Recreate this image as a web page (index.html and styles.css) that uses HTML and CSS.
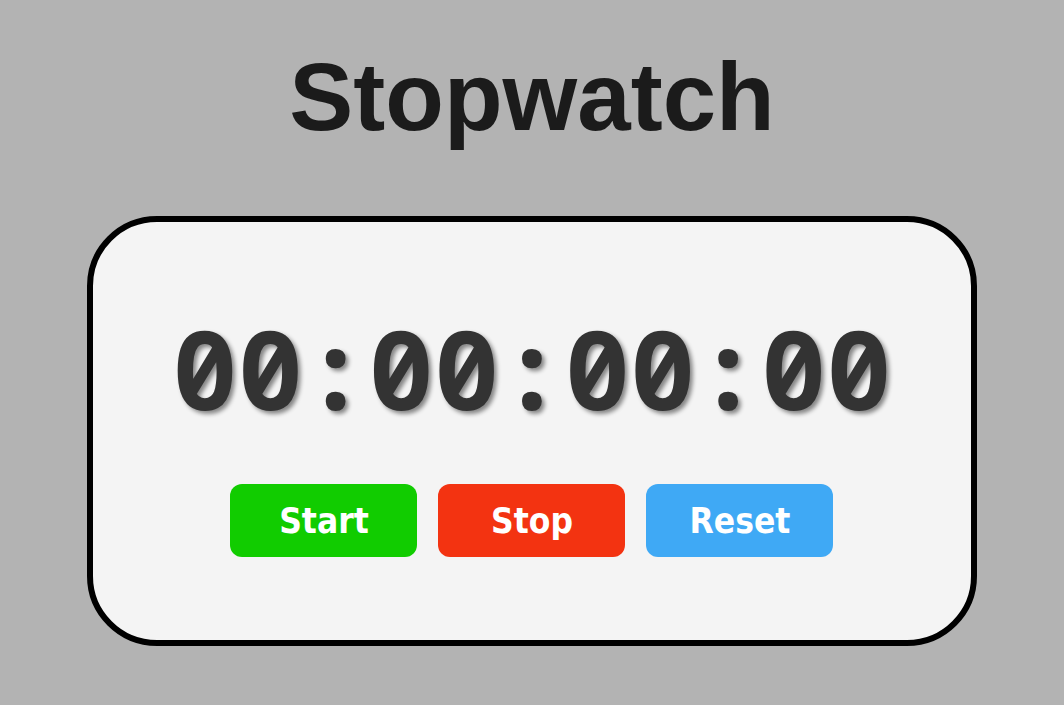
FILE: index.html
```html
<!DOCTYPE html>
<html>
<head>
<meta charset="utf-8">
<link rel="stylesheet" href="styles.css">
</head>
<body>
<h1 class="title">Stopwatch</h1>
<div class="card">
  <div class="time">00:00:00:00</div>
  <div class="buttons">
    <button class="btn start">Start</button>
    <button class="btn stop">Stop</button>
    <button class="btn reset">Reset</button>
  </div>
</div>
</body>
</html>
```
FILE: styles.css
```css
html, body {
  margin: 0;
  padding: 0;
}
body {
  background: #b3b3b3;
  padding: 0 8px;
  font-family: "Liberation Sans", Arial, sans-serif;
}
.title {
  margin: 0;
  padding-top: 49px;
  font-size: 96px;
  line-height: 96px;
  font-weight: bold;
  color: #1b1b1b;
  text-align: center;
}
.card {
  box-sizing: border-box;
  width: 85%;
  margin: 71px auto 0;
  background: #f4f4f4;
  border: 6px solid #000;
  border-radius: 70px;
  padding: 91px 0 83px;
  display: flex;
  flex-direction: column;
  align-items: center;
}
.time {
  font-family: "Noto Sans Mono", "DejaVu Sans Mono", monospace;
  font-feature-settings: "zero" 1;
  font-weight: bold;
  font-size: 109px;
  line-height: 109px;
  color: #333;
  text-shadow: 3px 3px 4px rgba(0, 0, 0, 0.45);
}
.buttons {
  margin-top: 62px;
  display: flex;
  gap: 21px;
}
.btn {
  width: 187px;
  height: 73px;
  border: none;
  border-radius: 12px;
  color: #fff;
  font-family: "DejaVu Sans Condensed", "DejaVu Sans", sans-serif;
  font-weight: bold;
  font-size: 35px;
  padding: 0;
}
.start { background: #11cc00; }
.stop { background: #f33311; }
.reset { background: #3fa9f5; }
```
